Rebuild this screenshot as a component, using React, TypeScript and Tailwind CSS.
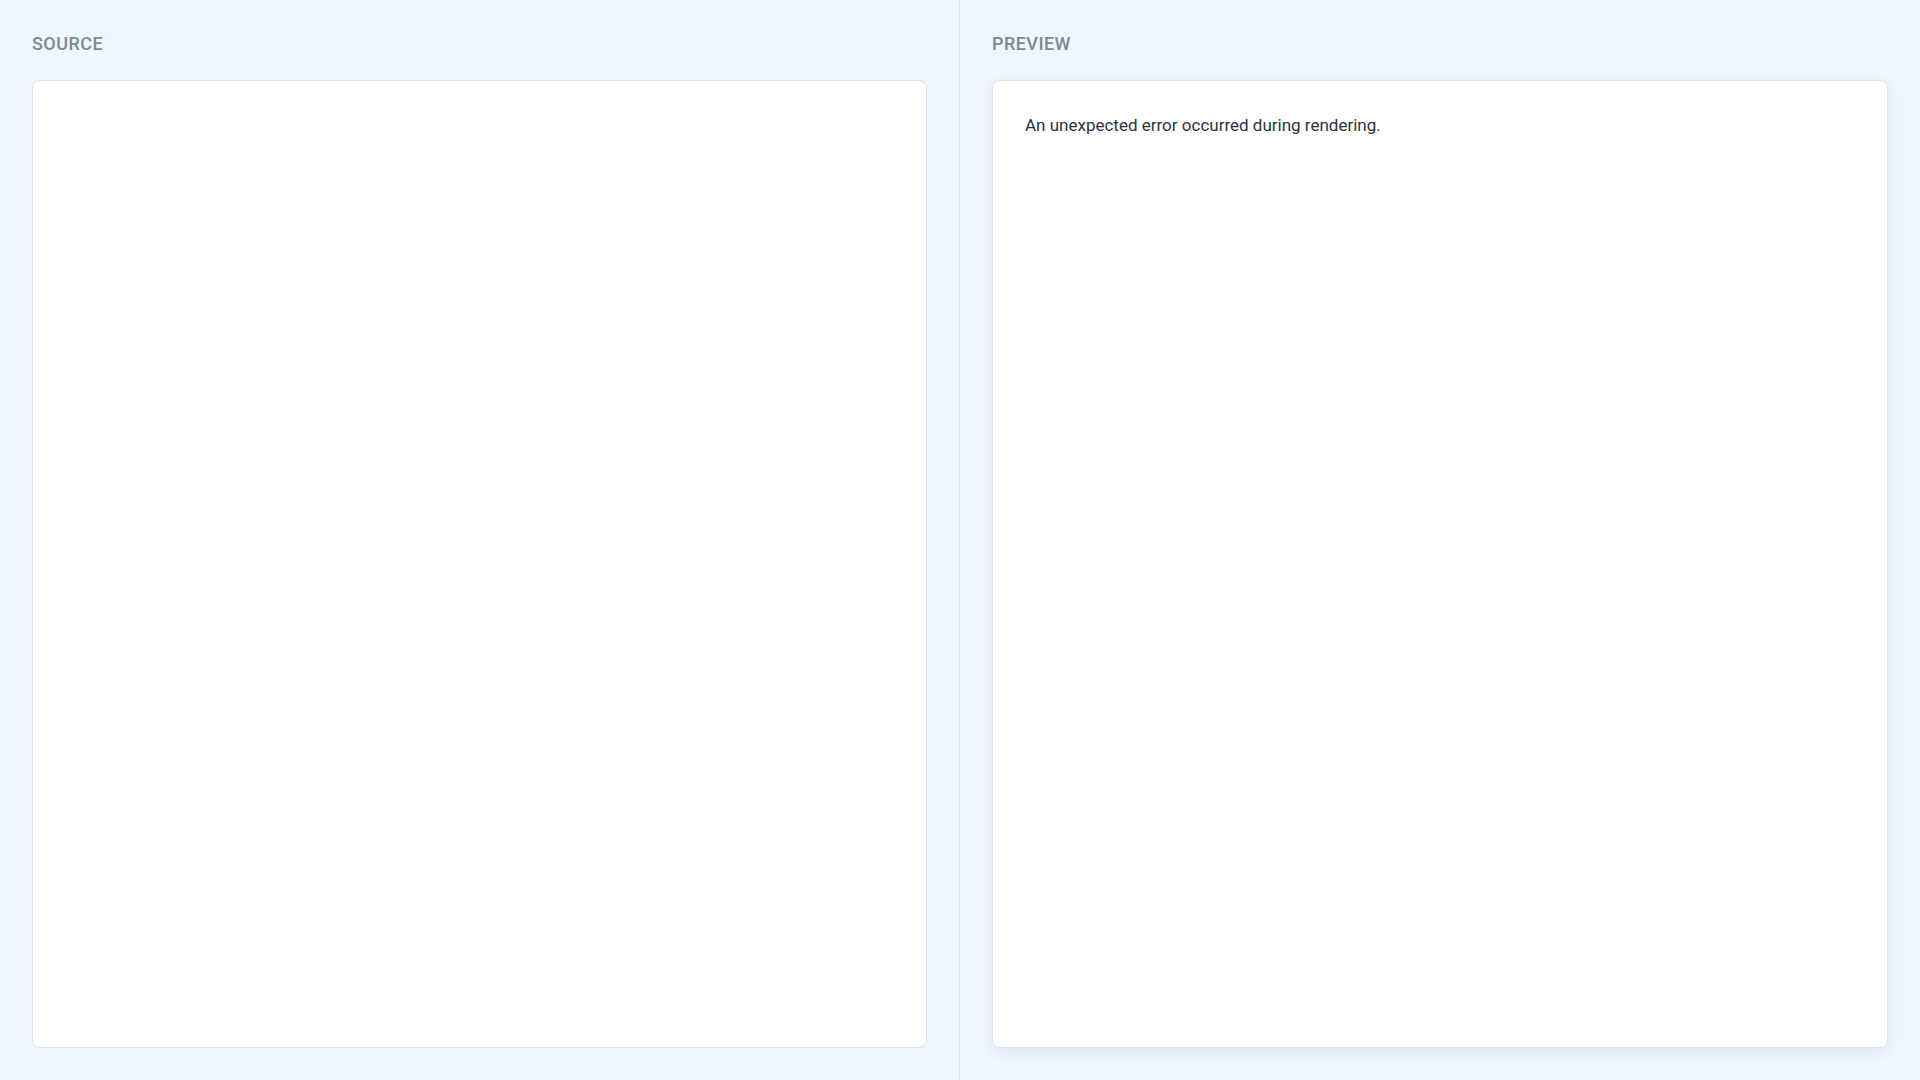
export default function App() {
  return (
    <div
      className="flex h-screen w-full bg-[#eff6fe]"
      style={{ fontFamily: "Roboto, 'Noto Sans', sans-serif" }}
    >
      <section className="flex w-1/2 flex-col border-r border-[#dde6f0] px-8 pb-8 pt-8">
        <h2 className="mb-6 h-6 text-[18px] font-medium uppercase leading-6 tracking-wide text-[#7c8a8f]">
          Source
        </h2>
        <div className="flex-1 rounded-lg border border-[#dbe4ee] bg-white" />
      </section>
      <section className="flex w-1/2 flex-col px-8 pb-8 pt-8">
        <h2 className="mb-6 h-6 text-[18px] font-medium uppercase leading-6 tracking-wide text-[#7c8a8f]">
          Preview
        </h2>
        <div className="flex-1 rounded-lg border border-[#dbe4ee] bg-white p-8 shadow-[0_4px_14px_rgba(30,60,110,0.08)]">
          <p className="text-[17px] leading-6 text-[#2b3440]">
            An unexpected error occurred during rendering.
          </p>
        </div>
      </section>
    </div>
  );
}
